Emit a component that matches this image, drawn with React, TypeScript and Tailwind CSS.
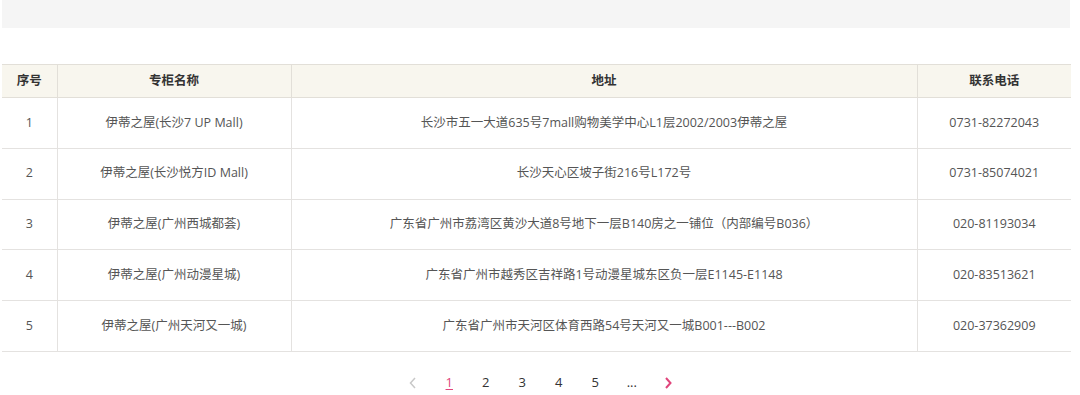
import React from 'react';

interface Store {
  id: number;
  name: string;
  address: string;
  phone: string;
}

const stores: Store[] = [
  { id: 1, name: '伊蒂之屋(长沙7 UP Mall)', address: '长沙市五一大道635号7mall购物美学中心L1层2002/2003伊蒂之屋', phone: '0731-82272043' },
  { id: 2, name: '伊蒂之屋(长沙悦方ID Mall)', address: '长沙天心区坡子街216号L172号', phone: '0731-85074021' },
  { id: 3, name: '伊蒂之屋(广州西城都荟)', address: '广东省广州市荔湾区黄沙大道8号地下一层B140房之一铺位（内部编号B036）', phone: '020-81193034' },
  { id: 4, name: '伊蒂之屋(广州动漫星城)', address: '广东省广州市越秀区吉祥路1号动漫星城东区负一层E1145-E1148', phone: '020-83513621' },
  { id: 5, name: '伊蒂之屋(广州天河又一城)', address: '广东省广州市天河区体育西路54号天河又一城B001---B002', phone: '020-37362909' },
];

const pages = ['1', '2', '3', '4', '5', '...'];

export default function App() {
  return (
    <div
      className="min-h-[395px] bg-white text-[12.5px] text-[#555]"
      style={{ fontFamily: '"Open Sans", "Noto Sans CJK SC", sans-serif' }}
    >
      <div className="ml-[2px] w-[1068px] h-[28px] bg-[#f5f5f5]" />

      <div className="ml-[2px] w-[1069px] mt-[36px]">
        <table className="w-full border-collapse table-fixed">
          <colgroup>
            <col className="w-[55px]" />
            <col className="w-[234px]" />
            <col className="w-[626px]" />
            <col className="w-[154px]" />
          </colgroup>
          <thead>
            <tr className="h-[33px] bg-[#f8f6ee] text-[12.5px] font-bold text-[#333]">
              <th className="border-y border-[#e2dfd8] border-r">序号</th>
              <th className="border-y border-[#e2dfd8] border-r">专柜名称</th>
              <th className="border-y border-[#e2dfd8] border-r">地址</th>
              <th className="border-y border-[#e2dfd8]">联系电话</th>
            </tr>
          </thead>
          <tbody>
            {stores.map((s) => (
              <tr key={s.id} className="h-[50.8px] text-center">
                <td className="border-b border-r border-[#e4e2e0]">{s.id}</td>
                <td className="border-b border-r border-[#e4e2e0]">{s.name}</td>
                <td className="border-b border-r border-[#e4e2e0]">{s.address}</td>
                <td className="border-b border-[#e4e2e0]">{s.phone}</td>
              </tr>
            ))}
          </tbody>
        </table>

        <div className="flex items-center justify-center pl-[8px] mt-[20px] h-[22px] text-[13px] text-[#333]">
          <span className="w-[36px] flex justify-center">
            <svg width="8" height="12" viewBox="0 0 8 12" fill="none" stroke="#c8c8c8" strokeWidth="1.5">
              <path d="M6 1 L1.5 6 L6 11" />
            </svg>
          </span>
          {pages.map((p, i) => (
            <span
              key={p}
              className={
                i === 0
                  ? 'w-[36.5px] text-center text-[#e0457b] underline underline-offset-2'
                  : 'w-[36.5px] text-center'
              }
            >
              {p}
            </span>
          ))}
          <span className="w-[36px] flex justify-center">
            <svg width="8" height="12" viewBox="0 0 8 12" fill="none" stroke="#e0457b" strokeWidth="2">
              <path d="M2 1 L6.5 6 L2 11" />
            </svg>
          </span>
        </div>
      </div>
    </div>
  );
}
